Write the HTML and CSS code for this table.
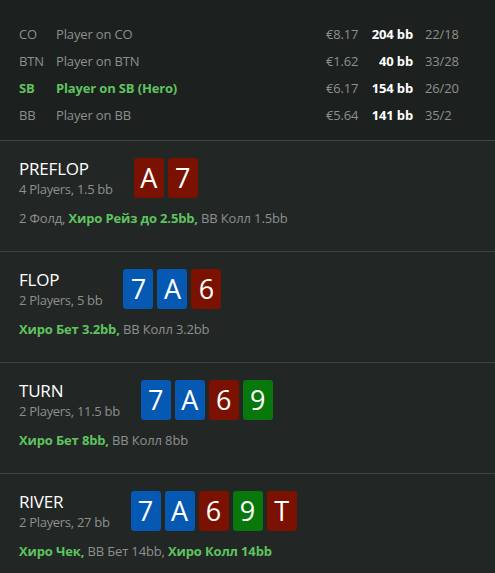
FILE: index.html
```html
<!DOCTYPE html>
<html>
<head>
<meta charset="utf-8">
<link rel="stylesheet" href="styles.css">
</head>
<body>
<div class="players">
  <div class="prow"><span class="pos">CO</span><span class="name">Player on CO</span><span class="money">€8.17</span><span class="bb">204 bb</span><span class="ratio">22/18</span></div>
  <div class="prow"><span class="pos">BTN</span><span class="name">Player on BTN</span><span class="money">€1.62</span><span class="bb">40 bb</span><span class="ratio">33/28</span></div>
  <div class="prow hero"><span class="pos">SB</span><span class="name">Player on SB (Hero)</span><span class="money">€6.17</span><span class="bb">154 bb</span><span class="ratio">26/20</span></div>
  <div class="prow"><span class="pos">BB</span><span class="name">Player on BB</span><span class="money">€5.64</span><span class="bb">141 bb</span><span class="ratio">35/2</span></div>
</div>

<div class="street">
  <div class="head">
    <div class="info"><div class="title">PREFLOP</div><div class="sub">4 Players, 1.5 bb</div></div>
    <div class="cards"><span class="card red">A</span><span class="card red">7</span></div>
  </div>
  <div class="actions">2 Фолд, <b class="h">Хиро Рейз до 2.5bb,</b> BB Колл 1.5bb</div>
</div>

<div class="street">
  <div class="head">
    <div class="info"><div class="title">FLOP</div><div class="sub">2 Players, 5 bb</div></div>
    <div class="cards"><span class="card blue">7</span><span class="card blue">A</span><span class="card red">6</span></div>
  </div>
  <div class="actions"><b class="h">Хиро Бет 3.2bb,</b> BB Колл 3.2bb</div>
</div>

<div class="street">
  <div class="head">
    <div class="info"><div class="title">TURN</div><div class="sub">2 Players, 11.5 bb</div></div>
    <div class="cards"><span class="card blue">7</span><span class="card blue">A</span><span class="card red">6</span><span class="card green">9</span></div>
  </div>
  <div class="actions"><b class="h">Хиро Бет 8bb,</b> BB Колл 8bb</div>
</div>

<div class="street">
  <div class="head">
    <div class="info"><div class="title">RIVER</div><div class="sub">2 Players, 27 bb</div></div>
    <div class="cards"><span class="card blue">7</span><span class="card blue">A</span><span class="card red">6</span><span class="card green">9</span><span class="card red">T</span></div>
  </div>
  <div class="actions"><b class="h">Хиро Чек,</b> BB Бет 14bb, <b class="h">Хиро Колл 14bb</b></div>
</div>
</body>
</html>
```

FILE: styles.css
```css
html, body {
  margin: 0;
  padding: 0;
  background: #222725;
  font-family: "Open Sans", "Noto Sans", sans-serif;
  color: #8c8f8d;
}
.players {
  background: #1c211f;
  padding: 20px 0 12px 19px;
}
.prow {
  display: flex;
  align-items: center;
  height: 27px;
  font-size: 13px;
  letter-spacing: -0.15px;
}
.pos { width: 37px; }
.name { width: 270px; }
.money { width: 42px; }
.bb {
  width: 45px;
  text-align: right;
  color: #ffffff;
  font-weight: bold;
}
.ratio { margin-left: 12px; }
.hero .pos, .hero .name {
  color: #5fc35f;
  font-weight: bold;
}
.street {
  border-top: 1px solid #3e4240;
  padding: 17px 19px 23px;
  height: 70px;
}
.head {
  display: flex;
  align-items: center;
}
.title {
  color: #ffffff;
  font-size: 17px;
  line-height: 22px;
  letter-spacing: -0.2px;
}
.sub {
  font-size: 13px;
  line-height: 18px;
  letter-spacing: -0.3px;
}
.cards {
  display: flex;
  gap: 4px;
  margin-left: 21px;
}
.card {
  width: 30px;
  height: 40px;
  border-radius: 3px;
  color: #ffffff;
  font-size: 27px;
  line-height: 40px;
  text-align: center;
}
.red { background: #7b1100; }
.blue { background: #0559b2; }
.green { background: #08780c; }
.actions {
  font-size: 13px;
  margin-top: 11px;
  line-height: 18px;
  letter-spacing: -0.15px;
}
.h {
  color: #5fc35f;
  font-weight: bold;
}
```
